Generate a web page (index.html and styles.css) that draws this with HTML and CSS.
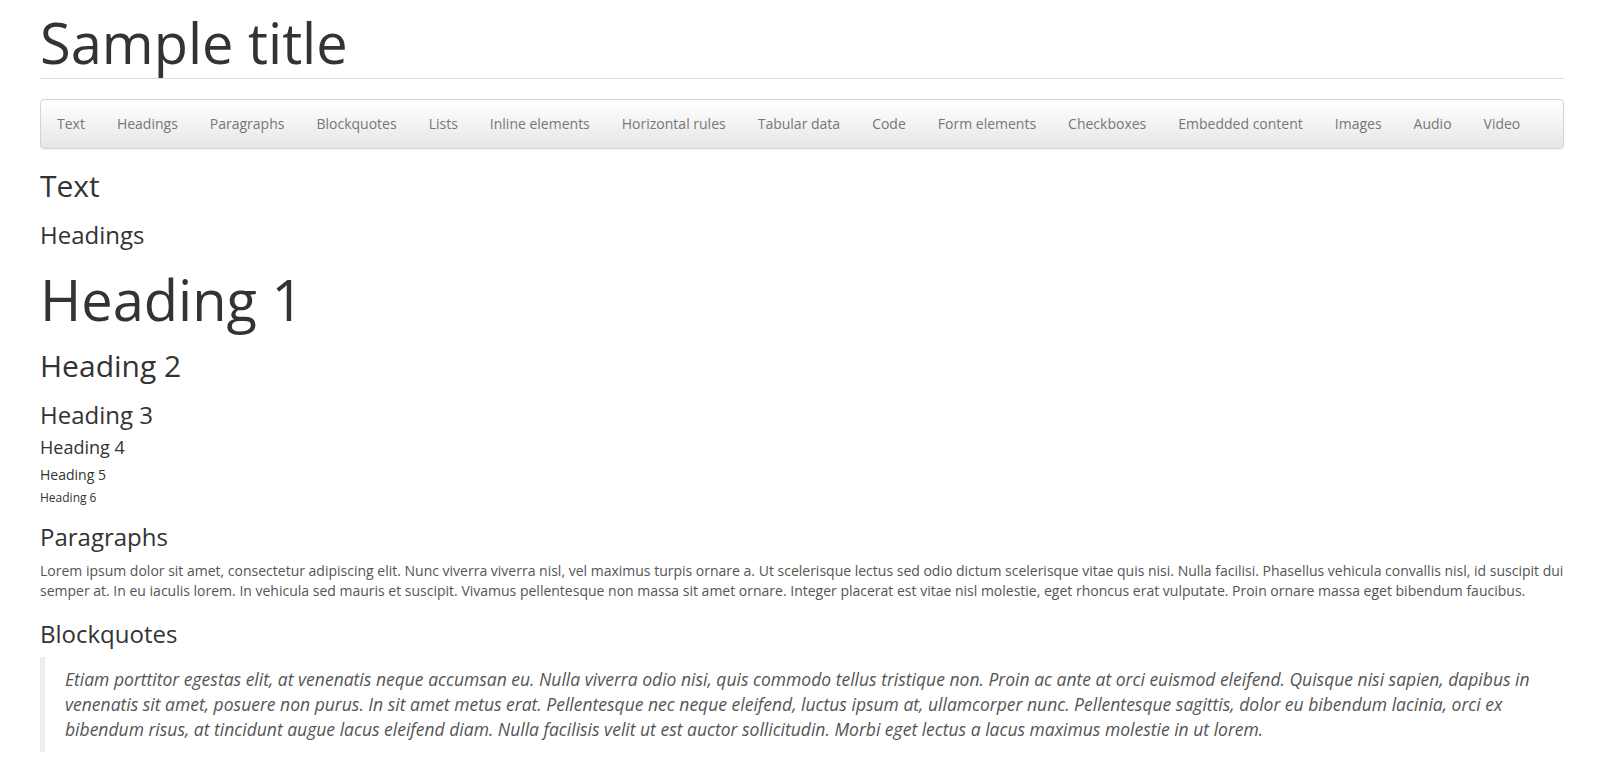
FILE: index.html
```html
<!DOCTYPE html>
<html lang="en">
<head>
<meta charset="utf-8">
<title>Sample title</title>
<link rel="stylesheet" href="styles.css">
</head>
<body>
<div class="container">
  <header class="page-header">
    <h1 class="site-title">Sample title</h1>
  </header>
  <nav class="navbar">
    <ul class="nav">
      <li><a href="#text">Text</a></li>
      <li><a href="#headings">Headings</a></li>
      <li><a href="#paragraphs">Paragraphs</a></li>
      <li><a href="#blockquotes">Blockquotes</a></li>
      <li><a href="#lists">Lists</a></li>
      <li><a href="#inline">Inline elements</a></li>
      <li><a href="#hr">Horizontal rules</a></li>
      <li><a href="#tables">Tabular data</a></li>
      <li><a href="#code">Code</a></li>
      <li><a href="#forms">Form elements</a></li>
      <li><a href="#checkboxes">Checkboxes</a></li>
      <li><a href="#embedded">Embedded content</a></li>
      <li><a href="#images">Images</a></li>
      <li><a href="#audio">Audio</a></li>
      <li><a href="#video">Video</a></li>
    </ul>
  </nav>
  <main>
    <section id="text">
      <h2 class="h-section">Text</h2>
      <article id="headings">
        <h3 class="h-sub">Headings</h3>
        <h1 class="h1">Heading 1</h1>
        <h2 class="h2">Heading 2</h2>
        <h3 class="h3">Heading 3</h3>
        <h4 class="h4">Heading 4</h4>
        <h5 class="h5">Heading 5</h5>
        <h6 class="h6">Heading 6</h6>
      </article>
      <article id="paragraphs">
        <h3 class="h-sub">Paragraphs</h3>
        <p class="para">Lorem ipsum dolor sit amet, consectetur adipiscing elit. Nunc viverra viverra nisl, vel maximus turpis ornare a. Ut scelerisque lectus sed odio dictum scelerisque vitae quis nisi. Nulla facilisi. Phasellus vehicula convallis nisl, id suscipit dui semper at. In eu iaculis lorem. In vehicula sed mauris et suscipit. Vivamus pellentesque non massa sit amet ornare. Integer placerat est vitae nisl molestie, eget rhoncus erat vulputate. Proin ornare massa eget bibendum faucibus.</p>
      </article>
      <article id="blockquotes">
        <h3 class="h-sub">Blockquotes</h3>
        <blockquote class="quote">
          <p>Etiam porttitor egestas elit, at venenatis neque accumsan eu. Nulla viverra odio nisi, quis commodo tellus tristique non. Proin ac ante at orci euismod eleifend. Quisque nisi sapien, dapibus in venenatis sit amet, posuere non purus. In sit amet metus erat. Pellentesque nec neque eleifend, luctus ipsum at, ullamcorper nunc. Pellentesque sagittis, dolor eu bibendum lacinia, orci ex bibendum risus, at tincidunt augue lacus eleifend diam. Nulla facilisis velit ut est auctor sollicitudin. Morbi eget lectus a lacus maximus molestie in ut lorem.</p>
        </blockquote>
      </article>
    </section>
  </main>
</div>
</body>
</html>
```
FILE: styles.css
```css
html, body {
  margin: 0;
  padding: 0;
  background: #fff;
}
body {
  font-family: "Open Sans", "Noto Sans", sans-serif;
  font-size: 14px;
  line-height: 20px;
  color: #555;
}
.container {
  padding: 0 36px 0 40px;
}
h1, h2, h3, h4, h5, h6 {
  font-family: "Open Sans", "Noto Sans", sans-serif;
  font-weight: 400;
  color: #333;
  line-height: 1.1;
  margin: 0;
}
.page-header {
  padding-top: 11px;
  padding-bottom: 5px;
  border-bottom: 1px solid #dddddd;
}
.site-title {
  font-size: 56px;
  line-height: 62px;
}
.navbar {
  margin-top: 20px;
  height: 48px;
  border: 1px solid #d4d4d4;
  border-radius: 4px;
  background: linear-gradient(to bottom, #ffffff 0%, #e6e6e6 100%);
  box-shadow: 0 1px 3px rgba(0,0,0,0.04);
}
.nav {
  list-style: none;
  margin: 0;
  padding: 0;
  display: flex;
}
.nav a {
  display: block;
  padding: 14px 16px;
  font-size: 14px;
  line-height: 20px;
  color: #777;
  text-decoration: none;
}
.h-section {
  font-size: 30px;
  margin-top: 20px;
  margin-bottom: 10px;
}
.h-sub {
  font-size: 24px;
  margin-top: 20px;
  margin-bottom: 10px;
}
.h1 {
  font-size: 56px;
  line-height: 60px;
  margin-top: 21px;
  margin-bottom: 10px;
}
.h2 {
  font-size: 30px;
  margin-top: 20px;
  margin-bottom: 10px;
}
.h3 {
  font-size: 24px;
  margin-top: 20px;
  margin-bottom: 9px;
}
.h4 {
  font-size: 18px;
  margin-top: 9px;
  margin-bottom: 9px;
}
.h5 {
  font-size: 14px;
  margin-top: 9px;
  margin-bottom: 9px;
}
.h6 {
  font-size: 12px;
  margin-top: 9px;
  margin-bottom: 10px;
}
.para {
  margin: 0 0 10px;
}
.quote {
  margin: 0 0 20px;
  padding: 10px 20px;
  border-left: 5px solid #eee;
  font-size: 17.5px;
  line-height: 25px;
  font-style: italic;
  color: #555;
}
.quote p {
  margin: 0;
}
```
